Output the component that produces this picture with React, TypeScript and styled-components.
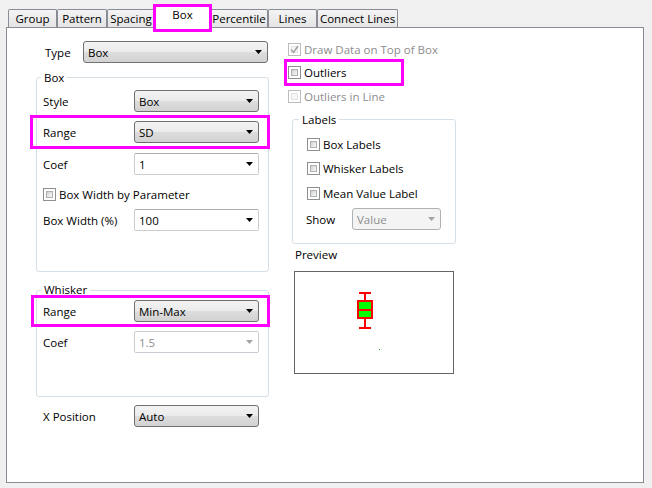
import React from "react";
import styled, { createGlobalStyle, css } from "styled-components";

const GlobalStyle = createGlobalStyle`
  html, body { margin: 0; padding: 0; background: #f0f0f0; }
  body {
    font-family: "Open Sans", "Noto Sans", sans-serif;
    font-size: 11.5px;
    color: #000;
  }
  * { box-sizing: border-box; }
`;

const Window = styled.div`
  width: 652px;
  height: 488px;
  padding: 5px 8px 5px 6px;
  background: #f0f0f0;
  display: flex;
  flex-direction: column;
`;

const TabStrip = styled.div`
  display: flex;
  align-items: flex-end;
  height: 22px;
  padding-left: 2px;
  position: relative;
  z-index: 1;
`;

const Tab = styled.div<{ $w: number; $active?: boolean; $marked?: boolean }>`
  width: ${(p) => p.$w}px;
  height: 18px;
  border: 1px solid #898c95;
  border-bottom: none;
  border-radius: 2px 2px 0 0;
  background: linear-gradient(#f4f4f4, #e4e4e4);
  display: flex;
  align-items: center;
  justify-content: center;
  line-height: 15px;
  white-space: nowrap;
  ${(p) =>
    p.$active &&
    css`
      height: 23px;
      margin-bottom: -1px;
      background: #fff;
      padding-bottom: 5px;
      position: relative;
    `}
  ${(p) =>
    p.$marked &&
    css`
      &::after {
        content: "";
        position: absolute;
        top: -2px;
        left: -3px;
        right: -3px;
        bottom: -4px;
        border: 3px solid #ff00ff;
        pointer-events: none;
      }
    `}
`;

const Panel = styled.div`
  height: 456px;
  border: 1px solid #898c95;
  background: #fff;
  display: flex;
  align-items: flex-start;
`;

const LeftCol = styled.div`
  margin-left: 29px;
  width: 233px;
  padding-top: 13px;
  display: flex;
  flex-direction: column;
`;

const RightCol = styled.div`
  margin-left: 19px;
  width: 167px;
  padding-top: 15px;
  display: flex;
  flex-direction: column;
`;

const Row = styled.div<{ $mt?: number; $pl?: number }>`
  display: flex;
  align-items: center;
  height: 22px;
  margin-top: ${(p) => p.$mt ?? 0}px;
  padding-left: ${(p) => p.$pl ?? 0}px;
  line-height: 15px;
`;

const Label = styled.span<{ $w: number; $ml?: number; $disabled?: boolean }>`
  width: ${(p) => p.$w}px;
  margin-left: ${(p) => p.$ml ?? 0}px;
  flex: none;
  white-space: nowrap;
  color: ${(p) => (p.$disabled ? "#8d8d8d" : "#000")};
`;

const Marked = styled.div<{ $mt: number; $t: number; $r: number; $b: number; $l: number }>`
  position: relative;
  margin-top: ${(p) => p.$mt}px;
  &::after {
    content: "";
    position: absolute;
    top: ${(p) => p.$t}px;
    right: ${(p) => p.$r}px;
    bottom: ${(p) => p.$b}px;
    left: ${(p) => p.$l}px;
    border: 3px solid #ff00ff;
    pointer-events: none;
  }
`;

type ComboKind = "button" | "edit" | "disabledEdit" | "disabledButton";

const ComboBox = styled.div<{ $w: number; $kind: ComboKind }>`
  width: ${(p) => p.$w}px;
  height: 22px;
  flex: none;
  display: flex;
  align-items: center;
  justify-content: space-between;
  padding: 0 5px 0 4px;
  border-radius: 3px;
  white-space: nowrap;
  ${(p) => {
    switch (p.$kind) {
      case "button":
        return css`
          border: 1px solid #707070;
          background: linear-gradient(#f3f3f3 0%, #ebebeb 48%, #dddddd 52%, #d2d2d2 100%);
          color: #000;
        `;
      case "edit":
        return css`
          border: 1px solid #c9ccd2;
          border-top-color: #abadb3;
          border-radius: 2px;
          background: #fff;
          color: #000;
        `;
      case "disabledEdit":
        return css`
          border: 1px solid #c9ccd2;
          border-radius: 2px;
          background: #fff;
          color: #8d8d8d;
        `;
      default:
        return css`
          border: 1px solid #adb2b5;
          background: #f4f4f4;
          color: #8d8d8d;
        `;
    }
  }}
`;

const Arrow = ({ color }: { color: string }) => (
  <svg width="7" height="4" viewBox="0 0 7 4">
    <polygon points="0,0 7,0 3.5,4" fill={color} />
  </svg>
);

const Combo = ({ w, kind, value }: { w: number; kind: ComboKind; value: string }) => (
  <ComboBox $w={w} $kind={kind}>
    <span>{value}</span>
    <Arrow color={kind === "disabledEdit" || kind === "disabledButton" ? "#a3a3a3" : "#000"} />
  </ComboBox>
);

const Group = styled.div<{ $mt: number; $h: number; $ml?: number; $w?: number; $pl: number }>`
  margin-top: ${(p) => p.$mt}px;
  margin-left: ${(p) => p.$ml ?? 0}px;
  height: ${(p) => p.$h}px;
  width: ${(p) => (p.$w ? `${p.$w}px` : "auto")};
  border: 1px solid #d5dfe5;
  border-radius: 3px;
  padding: 0 9px 0 ${(p) => p.$pl}px;
  display: flex;
  flex-direction: column;
`;

const GroupTitle = styled.div<{ $mt: number; $ml: number }>`
  width: fit-content;
  margin-top: ${(p) => p.$mt}px;
  margin-left: ${(p) => p.$ml}px;
  padding: 0 3px;
  background: #fff;
  line-height: 15px;
  height: 15px;
  white-space: nowrap;
`;

const CheckRow = styled.div<{ $mt?: number; $disabled?: boolean }>`
  display: flex;
  align-items: center;
  gap: 3px;
  height: 13px;
  margin-top: ${(p) => p.$mt ?? 0}px;
  line-height: 15px;
  white-space: nowrap;
  color: ${(p) => (p.$disabled ? "#8d8d8d" : "#000")};
`;

const Box = styled.span<{ $disabled?: boolean }>`
  width: 13px;
  height: 13px;
  flex: none;
  border: 1px solid ${(p) => (p.$disabled ? "#bcbcbc" : "#8e8f8f")};
  background: #fff;
  padding: 2px;
  display: flex;
  position: relative;
  &::before {
    content: "";
    flex: 1;
    border: 1px solid ${(p) => (p.$disabled ? "#e3e3e3" : "#aeb0b3")};
    background: ${(p) =>
      p.$disabled ? "#f6f6f6" : "linear-gradient(135deg, #cfd1d4 0%, #e9eaeb 60%, #f6f6f6 100%)"};
  }
`;

const Tick = styled.svg`
  position: absolute;
  left: 0;
  top: 0;
`;

const CheckBox = ({ disabled, checked }: { disabled?: boolean; checked?: boolean }) => (
  <Box $disabled={disabled}>
    {checked && (
      <Tick width="11" height="11" viewBox="0 0 11 11">
        <polyline points="2,5.5 4.5,8.5 9,2" fill="none" stroke="#a5a5a5" strokeWidth="1.6" />
      </Tick>
    )}
  </Box>
);

const Caption = styled.div<{ $mt: number; $ml: number }>`
  margin-top: ${(p) => p.$mt}px;
  margin-left: ${(p) => p.$ml}px;
  line-height: 15px;
`;

const Preview = styled.div`
  margin-top: 9px;
  margin-left: 6px;
  width: 160px;
  height: 103px;
  border: 1px solid #646464;
  background: #fff;
  display: flex;
`;

export default function App() {
  return (
    <>
      <GlobalStyle />
      <Window>
        <TabStrip>
          <Tab $w={49}>Group</Tab>
          <Tab $w={50}>Pattern</Tab>
          <Tab $w={48}>Spacing</Tab>
          <Tab $w={55} $active $marked>
            Box
          </Tab>
          <Tab $w={58}>Percentile</Tab>
          <Tab $w={49}>Lines</Tab>
          <Tab $w={81}>Connect Lines</Tab>
        </TabStrip>
        <Panel>
          <LeftCol>
            <Row $pl={9}>
              <Label $w={38}>Type</Label>
              <Combo w={185} kind="button" value="Box" />
            </Row>

            <Group $mt={14} $h={195} $pl={6}>
              <GroupTitle $mt={-8} $ml={-2}>
                Box
              </GroupTitle>
              <Row $mt={5}>
                <Label $w={91}>Style</Label>
                <Combo w={125} kind="button" value="Box" />
              </Row>
              <Marked $mt={9} $t={-6} $r={-11} $b={-6} $l={-13}>
                <Row>
                  <Label $w={91}>Range</Label>
                  <Combo w={125} kind="button" value="SD" />
                </Row>
              </Marked>
              <Row $mt={10}>
                <Label $w={91}>Coef</Label>
                <Combo w={125} kind="edit" value="1" />
              </Row>
              <CheckRow $mt={13}>
                <CheckBox />
                <span>Box Width by Parameter</span>
              </CheckRow>
              <Row $mt={8}>
                <Label $w={91}>Box Width (%)</Label>
                <Combo w={125} kind="edit" value="100" />
              </Row>
            </Group>

            <Group $mt={18} $h={107} $pl={6}>
              <GroupTitle $mt={-9} $ml={-2}>
                Whisker
              </GroupTitle>
              <Marked $mt={3} $t={-5} $r={-11} $b={-5} $l={-12}>
                <Row>
                  <Label $w={91}>Range</Label>
                  <Combo w={125} kind="button" value="Min-Max" />
                </Row>
              </Marked>
              <Row $mt={9}>
                <Label $w={91}>Coef</Label>
                <Combo w={125} kind="disabledEdit" value="1.5" />
              </Row>
            </Group>

            <Row $mt={8} $pl={7}>
              <Label $w={91}>X Position</Label>
              <Combo w={125} kind="button" value="Auto" />
            </Row>
          </LeftCol>

          <RightCol>
            <CheckRow $disabled>
              <CheckBox disabled checked />
              <span>Draw Data on Top of Box</span>
            </CheckRow>
            <Marked $mt={10} $t={-7} $r={51} $b={-7} $l={-4}>
              <CheckRow>
                <CheckBox />
                <span>Outliers</span>
              </CheckRow>
            </Marked>
            <CheckRow $mt={11} $disabled>
              <CheckBox disabled />
              <span>Outliers in Line</span>
            </CheckRow>

            <Group $mt={16} $h={125} $ml={4} $w={164} $pl={14}>
              <GroupTitle $mt={-8} $ml={-8}>
                Labels
              </GroupTitle>
              <CheckRow $mt={11}>
                <CheckBox />
                <span>Box Labels</span>
              </CheckRow>
              <CheckRow $mt={11}>
                <CheckBox />
                <span>Whisker Labels</span>
              </CheckRow>
              <CheckRow $mt={12}>
                <CheckBox />
                <span>Mean Value Label</span>
              </CheckRow>
              <Row $mt={8}>
                <Label $w={46} $ml={-1}>
                  Show
                </Label>
                <Combo w={89} kind="disabledButton" value="Value" />
              </Row>
            </Group>

            <Caption $mt={3} $ml={7}>
              Preview
            </Caption>
            <Preview>
              <svg width="158" height="101" viewBox="0 0 158 101">
                <line x1="70" y1="21" x2="70" y2="56" stroke="#ff0000" strokeWidth="2" />
                <line x1="64" y1="21" x2="76" y2="21" stroke="#ff0000" strokeWidth="2" />
                <line x1="64" y1="56" x2="76" y2="56" stroke="#ff0000" strokeWidth="2" />
                <rect x="63" y="29" width="14" height="17" fill="#00ff00" stroke="#ff0000" strokeWidth="2" />
                <line x1="63" y1="38" x2="77" y2="38" stroke="#ff0000" strokeWidth="2" />
                <rect x="84" y="77" width="1" height="1" fill="#1a9a1a" />
              </svg>
            </Preview>
          </RightCol>
        </Panel>
      </Window>
    </>
  );
}
